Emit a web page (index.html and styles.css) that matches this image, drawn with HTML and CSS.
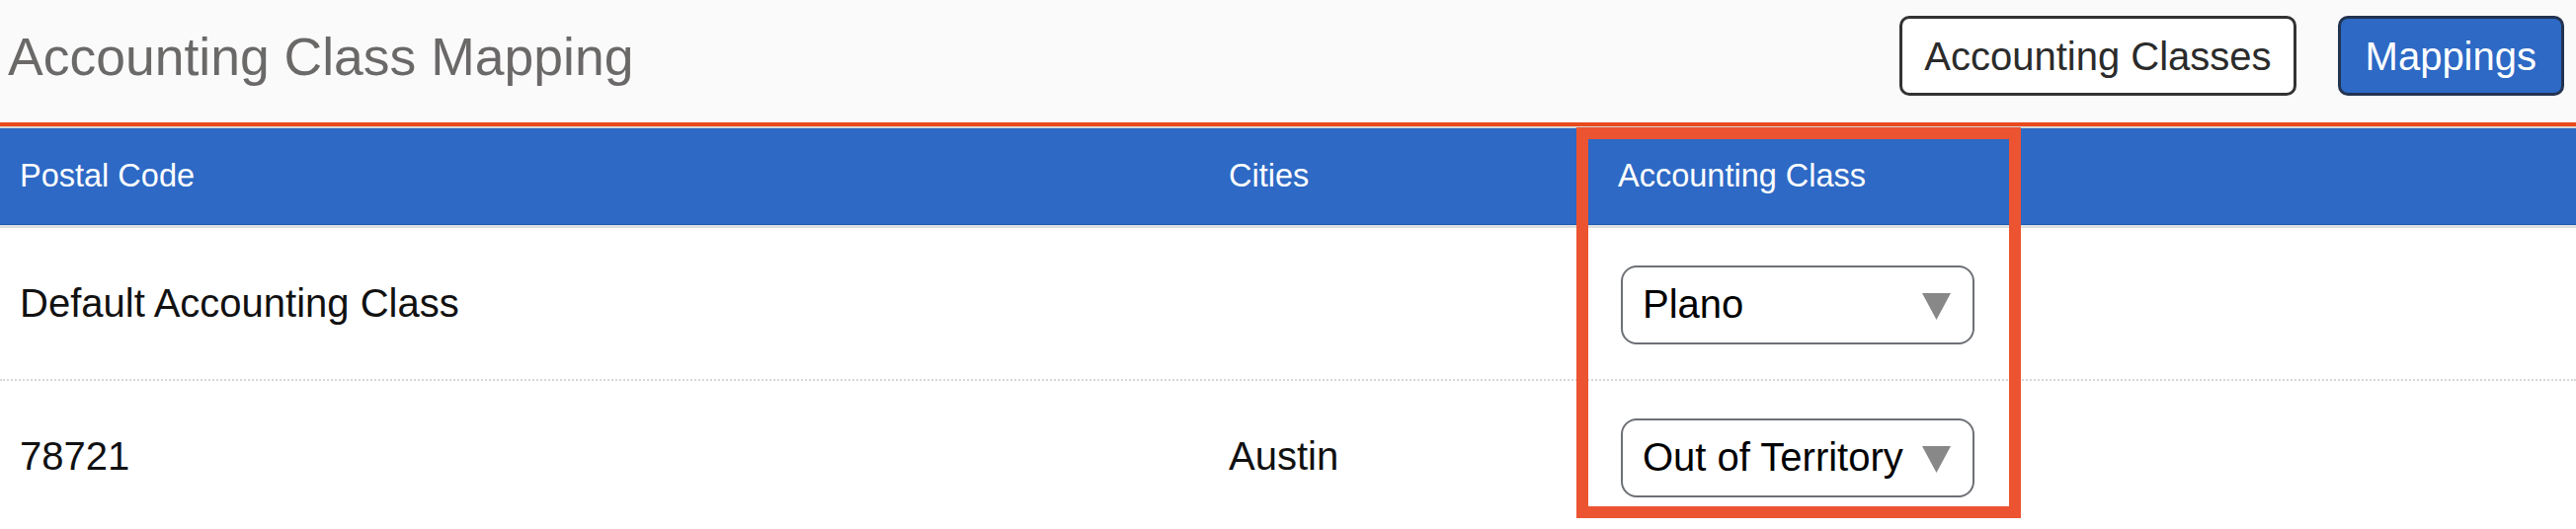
FILE: index.html
```html
<!DOCTYPE html>
<html lang="en">
<head>
<meta charset="utf-8">
<title>Accounting Class Mapping</title>
<link rel="stylesheet" href="styles.css">
</head>
<body>
  <div class="topbar">
    <h1 class="title">Accounting Class Mapping</h1>
    <div class="actions">
      <button class="btn btn-outline">Accounting Classes</button>
      <button class="btn btn-primary">Mappings</button>
    </div>
  </div>

  <div class="table">
    <div class="thead">
      <div class="row head-row">
        <div class="cell">Postal Code</div>
        <div class="cell">Cities</div>
        <div class="cell">Accounting Class</div>
      </div>
    </div>
    <div class="row body-row">
      <div class="cell">Default Accounting Class</div>
      <div class="cell"></div>
      <div class="cell">
        <div class="select"><span class="select-value">Plano</span><svg class="caret" width="29" height="27" viewBox="0 0 29 27"><polygon points="0,0 29,0 14.5,27" fill="#888888"/></svg></div>
      </div>
    </div>
    <div class="row body-row">
      <div class="cell">78721</div>
      <div class="cell">Austin</div>
      <div class="cell">
        <div class="select"><span class="select-value">Out of Territory</span><svg class="caret" width="29" height="27" viewBox="0 0 29 27"><polygon points="0,0 29,0 14.5,27" fill="#888888"/></svg></div>
      </div>
    </div>
  </div>

  <div class="highlight"></div>
</body>
</html>
```

FILE: styles.css
```css
html, body {
  margin: 0;
  padding: 0;
  background: #ffffff;
}

body {
  font-family: "Liberation Sans", Arial, sans-serif;
  position: relative;
  overflow: hidden;
}

.topbar {
  box-sizing: border-box;
  height: 128px;
  background: #fafafa;
  border-bottom: 4px solid #e94a1d;
  padding: 0 12px 11px 8px;
  display: flex;
  align-items: center;
  justify-content: space-between;
}

.title {
  margin: 0;
  margin-top: 2px;
  font-size: 53.5px;
  line-height: 1;
  font-weight: normal;
  color: #6b6868;
}

.actions {
  display: flex;
  align-items: center;
  gap: 42px;
}

.btn {
  box-sizing: border-box;
  height: 81px;
  padding: 0 22px;
  border: 3px solid #333333;
  border-radius: 10px;
  font-family: "Liberation Sans", Arial, sans-serif;
  font-size: 40px;
  line-height: 1;
  display: flex;
  align-items: center;
  cursor: pointer;
}

.btn-outline {
  background: #ffffff;
  color: #2b2b2b;
}

.btn-primary {
  background: #2d69c5;
  border-color: #233350;
  color: #ffffff;
  padding: 0 25px;
}

.thead {
  border-top: 2px solid #d6d6d6;
  border-bottom: 3px solid #dfdfdf;
}

.row {
  display: grid;
  grid-template-columns: 1224px 394px 1fr;
  align-items: center;
}

.head-row {
  box-sizing: border-box;
  height: 98px;
  background: #2d69c5;
  border-bottom: 1px solid #1b5bb3;
  color: #ffffff;
  font-size: 32.5px;
}

.cell {
  padding-left: 20px;
}

.body-row {
  box-sizing: border-box;
  height: 155px;
  border-bottom: 2px dotted #d6d6d6;
  font-size: 40px;
  color: #111111;
}

.select {
  box-sizing: border-box;
  width: 358px;
  height: 80px;
  margin-left: 3px;
  margin-top: 2px;
  border: 2px solid #6d7075;
  border-radius: 16px;
  background: #ffffff;
  display: flex;
  align-items: center;
  justify-content: space-between;
  padding: 0 22px 0 20px;
  color: #000000;
  white-space: nowrap;
}

.caret {
  flex: none;
  margin-top: 3px;
}

.highlight {
  position: absolute;
  left: 1596px;
  top: 129px;
  width: 426px;
  height: 372px;
  border: 12px solid #ec5431;
}
```
